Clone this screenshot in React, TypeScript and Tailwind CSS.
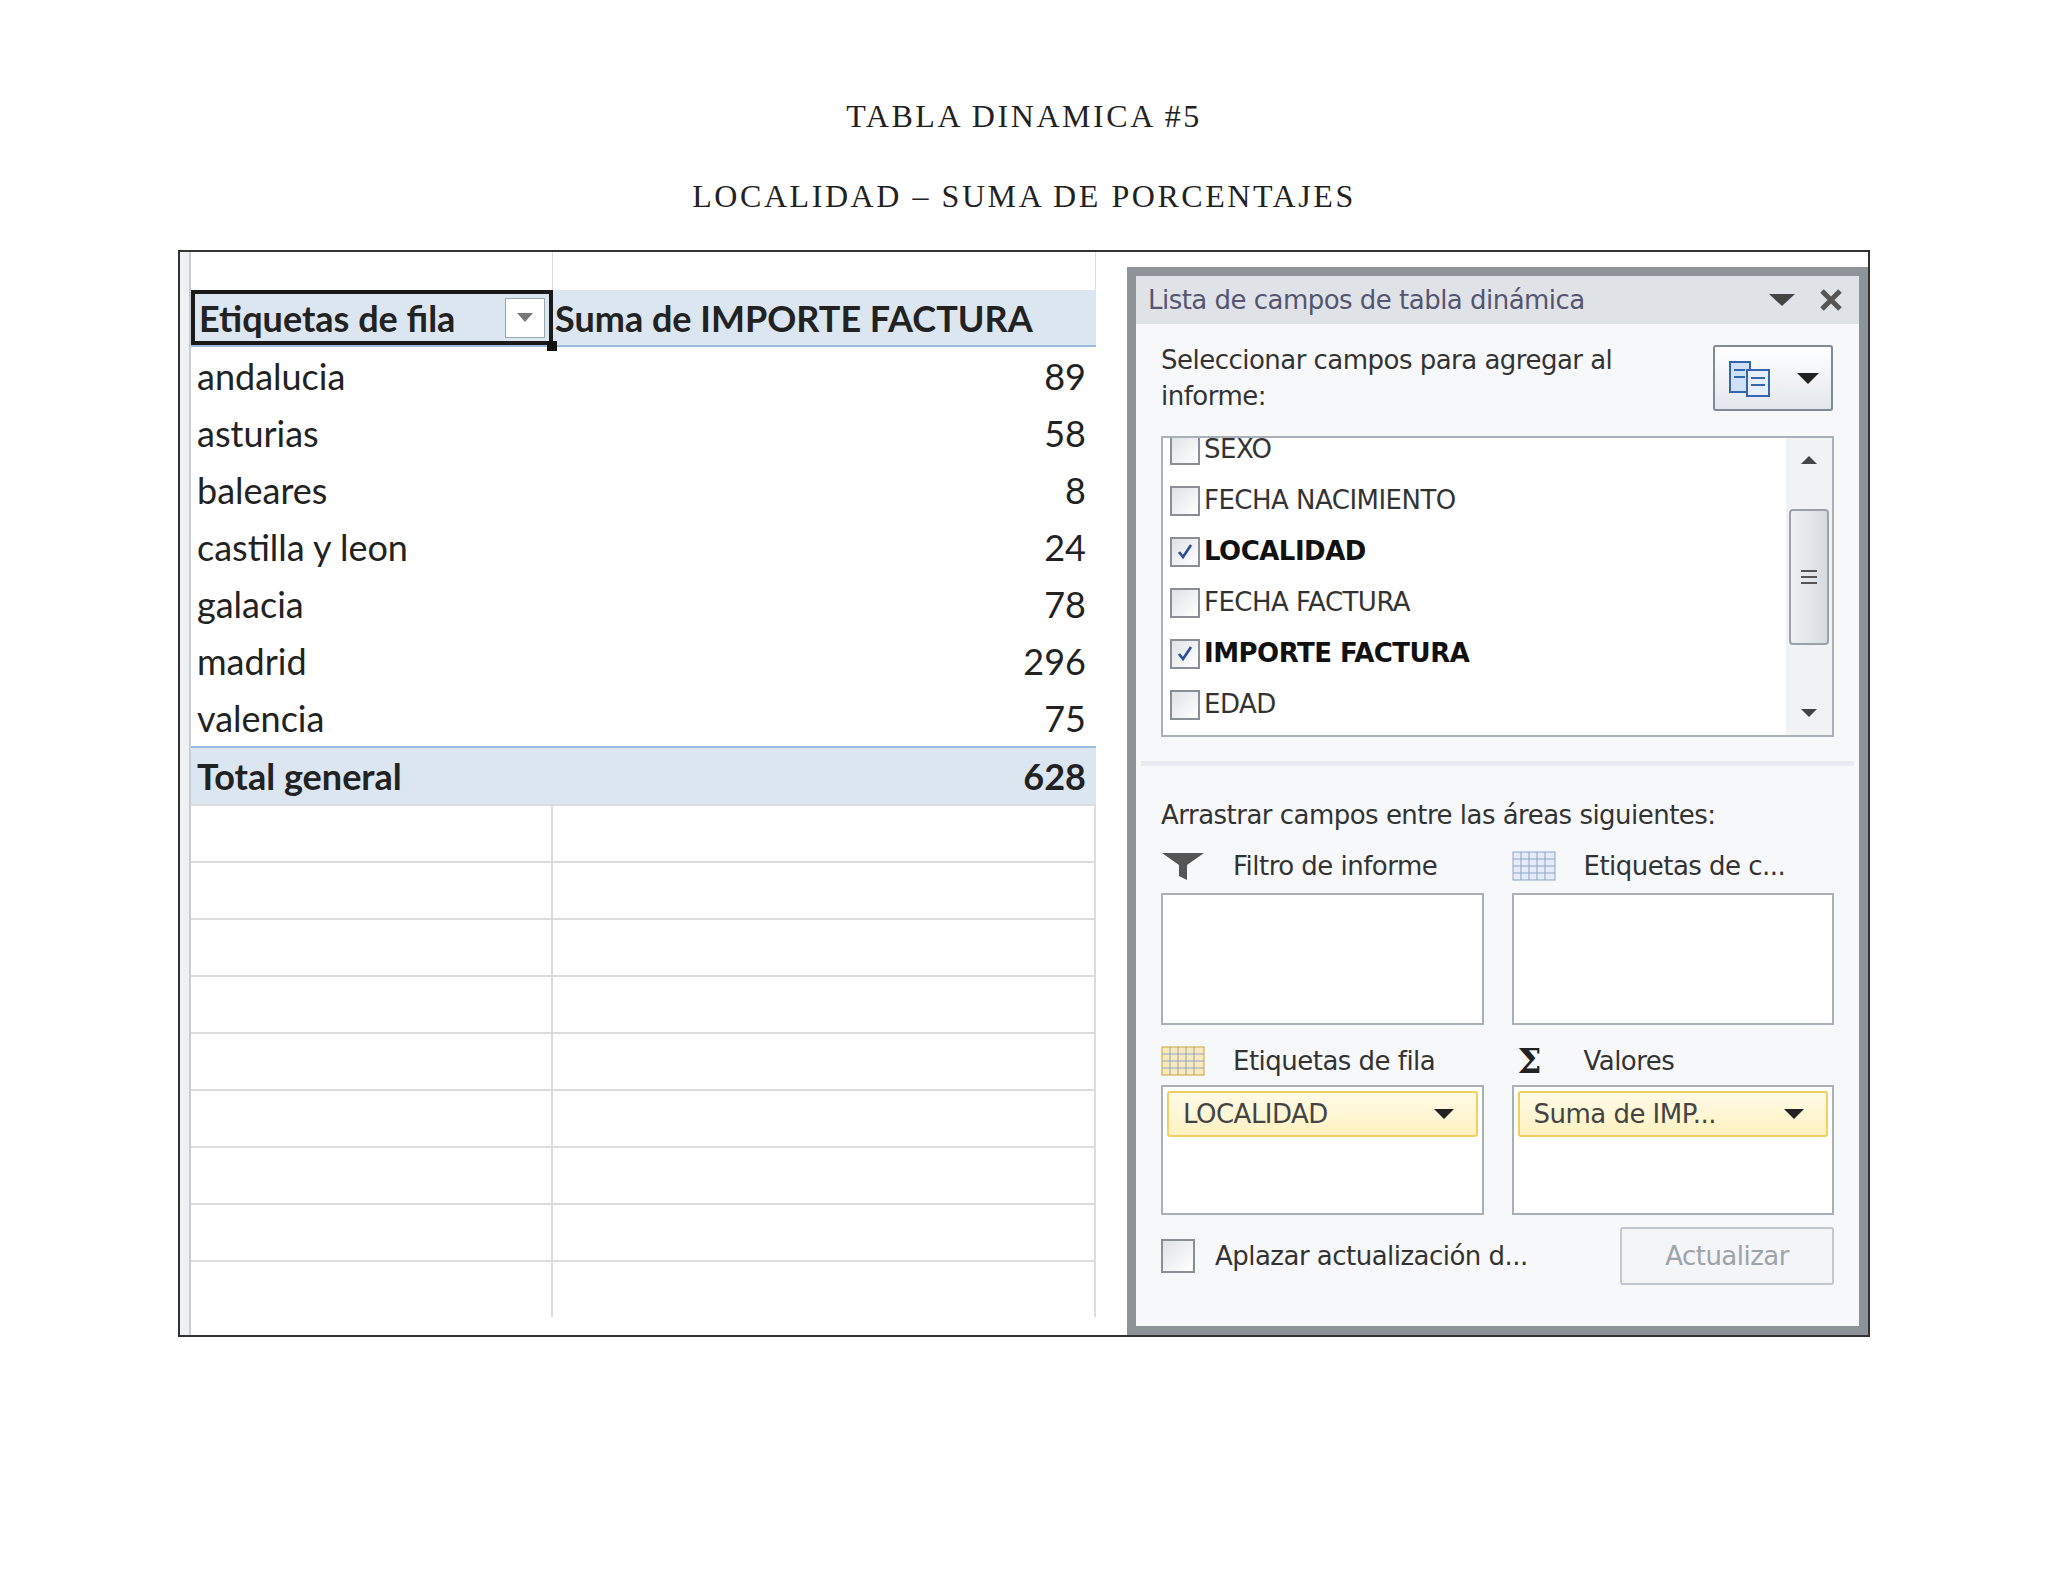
import React from "react";

const rows = [
  ["andalucia", "89"],
  ["asturias", "58"],
  ["baleares", "8"],
  ["castilla y leon", "24"],
  ["galacia", "78"],
  ["madrid", "296"],
  ["valencia", "75"],
];

const fields = [
  ["FECHA NACIMIENTO", false],
  ["LOCALIDAD", true],
  ["FECHA FACTURA", false],
  ["IMPORTE FACTURA", true],
  ["EDAD", false],
] as const;

function Box({ checked }: { checked: boolean }) {
  return (
    <span className="flex h-[30px] w-[30px] shrink-0 items-center justify-center border-2 border-[#8a8f96] bg-gradient-to-br from-[#dfe2e6] to-white">
      {checked && (
        <svg width="20" height="20" viewBox="0 0 20 20">
          <path d="M4 10 L8 15 L16 3" stroke="#2c4f9a" strokeWidth="2.6" fill="none" />
        </svg>
      )}
    </span>
  );
}

function Grid() {
  return (
    <svg width="44" height="30" viewBox="0 0 44 30">
      <rect x="1" y="1" width="42" height="28" fill="#e6ecf7" stroke="#8da3c9" />
      {[8, 15, 22].map((y) => <line key={y} x1="1" x2="43" y1={y} y2={y} stroke="#8da3c9" />)}
      {[9, 17, 25, 33].map((x) => <line key={x} y1="1" y2="29" x1={x} x2={x} stroke="#8da3c9" />)}
    </svg>
  );
}

function Chip({ label }: { label: string }) {
  return (
    <div className="m-[4px] flex h-[46px] items-center justify-between rounded-[3px] border-2 border-[#f2cf5e] bg-gradient-to-b from-[#fffbe8] to-[#fff1c0] pl-[14px] pr-[22px] text-[#444]">
      <span>{label}</span>
      <svg width="20" height="10" viewBox="0 0 20 10"><path d="M0 0 L20 0 L10 10 Z" fill="#222" /></svg>
    </div>
  );
}

export default function App() {
  return (
    <div className="flex h-[1582px] w-[2048px] flex-col items-center bg-white">
      <div className="mt-[92px] font-[Liberation_Serif,serif] text-[32px] tracking-[0.08em] text-[#222]">TABLA DINAMICA #5</div>
      <div className="mt-[32px] font-[Liberation_Serif,serif] text-[32px] tracking-[0.08em] text-[#222]">LOCALIDAD – SUMA DE PORCENTAJES</div>

      <div className="mt-[30px] flex h-[1087px] w-[1692px] border-2 border-[#333] font-[Lato,sans-serif] text-[36px] text-[#222]">
        <div className="w-[11px] shrink-0 border-r-2 border-[#c8cdd3] bg-[#eef0f2]" />
        <div className="flex w-[905px] shrink-0 flex-col">
          <div className="flex h-[38px] shrink-0">
            <div className="w-[362px] border-r border-[#dadcdd]" />
            <div className="flex-1 border-r border-[#dadcdd]" />
          </div>
          <div className="flex h-[57px] shrink-0 border-b-2 border-[#9bbbe0] bg-[#dce6f1] font-bold">
            <div className="relative flex w-[362px] items-center justify-between border-[4px] border-[#1a1a1a] px-[4px]">
              <span>Etiquetas de fila</span>
              <span className="flex h-[40px] w-[40px] items-center justify-center border border-[#9aa] bg-white">
                <svg width="16" height="10" viewBox="0 0 16 10"><path d="M0 0 L16 0 L8 9 Z" fill="#777" /></svg>
              </span>
              <span className="absolute -bottom-[10px] -right-[8px] h-[10px] w-[10px] bg-[#111]" />
            </div>
            <div className="flex flex-1 items-center pl-[2px]">Suma de IMPORTE FACTURA</div>
          </div>
          {rows.map(([n, v]) => (
            <div key={n} className="flex h-[57px] shrink-0 items-center justify-between pl-[6px] pr-[10px]">
              <span>{n}</span>
              <span>{v}</span>
            </div>
          ))}
          <div className="flex h-[58px] shrink-0 items-center justify-between border-t-2 border-[#9bbbe0] bg-[#dce6f1] pl-[6px] pr-[10px] font-bold">
            <span>Total general</span>
            <span>628</span>
          </div>
          {Array.from({ length: 9 }).map((_, i) => (
            <div key={i} className="flex h-[57px] shrink-0 border-t-2 border-[#dadcdd]">
              <div className="w-[362px] border-r-2 border-[#dadcdd]" />
              <div className="flex-1 border-r-2 border-[#dadcdd]" />
            </div>
          ))}
        </div>
        <div className="flex flex-1 items-end justify-end pl-[16px] pt-[15px]">
          <div className="flex h-full w-[741px] flex-col border-[9px] border-[#8e9399] bg-[#f7f8fa] font-[DejaVu_Sans,sans-serif] text-[26px] tracking-[-0.02em] text-[#333]">
            <div className="flex h-[48px] shrink-0 items-center justify-between bg-[#dfe3e8] pl-[12px] pr-[16px] text-[#555570]">
              <span>Lista de campos de tabla dinámica</span>
              <span className="flex items-center gap-[24px]">
                <svg width="26" height="12" viewBox="0 0 26 12"><path d="M0 0 L26 0 L13 12 Z" fill="#444" /></svg>
                <svg width="24" height="24" viewBox="0 0 24 24"><path d="M3 3 L21 21 M21 3 L3 21" stroke="#555" strokeWidth="5" /></svg>
              </span>
            </div>
            <div className="flex shrink-0 items-start justify-between pl-[25px] pr-[26px] pt-[18px]">
              <div className="leading-[36px]">Seleccionar campos para agregar al<br />informe:</div>
              <div className="mt-[3px] flex h-[66px] w-[120px] items-center justify-center gap-[24px] rounded-[3px] border-2 border-[#7f8a96] bg-gradient-to-b from-white to-[#e3e7ec]">
                <svg width="46" height="40" viewBox="0 0 46 40">
                  <rect x="3" y="4" width="20" height="30" fill="#cfe0f7" stroke="#3465b0" strokeWidth="2" />
                  <rect x="20" y="12" width="22" height="26" fill="#e6effb" stroke="#3465b0" strokeWidth="2" />
                  <path d="M7 12 H18 M7 19 H18 M24 20 H38 M24 27 H38" stroke="#3465b0" strokeWidth="2" />
                </svg>
                <svg width="22" height="11" viewBox="0 0 22 11"><path d="M0 0 L22 0 L11 11 Z" fill="#222" /></svg>
              </div>
            </div>
            <div className="mx-[25px] mt-[22px] flex h-[301px] shrink-0 border-2 border-[#a9b0b8] bg-white">
              <div className="flex flex-1 flex-col overflow-hidden pl-[7px]">
                <div className="-mt-[14px] flex h-[51px] shrink-0 items-center gap-[4px]"><Box checked={false} /><span>SEXO</span></div>
                {fields.map(([n, c]) => (
                  <div key={n} className={`flex h-[51px] shrink-0 items-center gap-[4px] ${c ? "font-bold text-[#111]" : ""}`}>
                    <Box checked={c} />
                    <span>{n}</span>
                  </div>
                ))}
              </div>
              <div className="flex w-[46px] shrink-0 flex-col items-center justify-between bg-[#f1f2f4] py-[18px]">
                <svg width="16" height="8" viewBox="0 0 16 8"><path d="M0 8 L16 8 L8 0 Z" fill="#444" /></svg>
                <div className="-mt-[20px] flex h-[136px] w-[40px] flex-col items-center justify-center gap-[4px] rounded-[4px] border-2 border-[#9aa1a9] bg-gradient-to-r from-[#eef0f3] to-[#d7dbe0]">
                  {[0, 1, 2].map((i) => <span key={i} className="h-[2px] w-[16px] bg-[#555]" />)}
                </div>
                <svg width="16" height="8" viewBox="0 0 16 8"><path d="M0 0 L16 0 L8 8 Z" fill="#444" /></svg>
              </div>
            </div>
            <div className="mx-[5px] mt-[24px] h-[5px] shrink-0 bg-[#e8ebef]" />
            <div className="mt-[30px] shrink-0 pl-[25px]">Arrastrar campos entre las áreas siguientes:</div>
            <div className="mx-[25px] mt-[4px] grid shrink-0 grid-cols-2 gap-x-[28px]">
              <div className="flex h-[54px] items-center gap-[28px]">
                <svg width="44" height="30" viewBox="0 0 44 30"><path d="M1 2 L43 2 L26 14 L26 29 L18 25 L18 14 Z" fill="#555" /></svg>
                <span>Filtro de informe</span>
              </div>
              <div className="flex h-[54px] items-center gap-[28px]"><Grid /><span>Etiquetas de c...</span></div>
              <div className="h-[132px] border-2 border-[#a9b0b8] bg-white" />
              <div className="h-[132px] border-2 border-[#a9b0b8] bg-white" />
              <div className="mt-[12px] flex h-[48px] items-center gap-[28px]">
                <svg width="44" height="30" viewBox="0 0 44 30">
                  <rect x="1" y="1" width="42" height="28" fill="#fbeab8" stroke="#c9a13c" />
                  {[8, 15, 22].map((y) => <line key={y} x1="1" x2="43" y1={y} y2={y} stroke="#8da3c9" />)}
                  {[9, 17, 25, 33].map((x) => <line key={x} y1="1" y2="29" x1={x} x2={x} stroke="#8da3c9" />)}
                </svg>
                <span>Etiquetas de fila</span>
              </div>
              <div className="mt-[12px] flex h-[48px] items-center gap-[28px]">
                <span className="w-[44px] pl-[6px] font-[DejaVu_Serif,serif] text-[34px] font-bold text-[#222]">Σ</span>
                <span>Valores</span>
              </div>
              <div className="h-[130px] border-2 border-[#a9b0b8] bg-white"><Chip label="LOCALIDAD" /></div>
              <div className="h-[130px] border-2 border-[#a9b0b8] bg-white"><Chip label="Suma de IMP..." /></div>
            </div>
            <div className="mx-[25px] mt-[12px] flex shrink-0 items-center justify-between">
              <div className="flex items-center gap-[20px]">
                <span className="h-[34px] w-[34px] border-2 border-[#8a8f96] bg-gradient-to-br from-[#dfe2e6] to-white" />
                <span>Aplazar actualización d...</span>
              </div>
              <div className="flex h-[58px] w-[214px] items-center justify-center rounded-[3px] border-2 border-[#c3c8ce] bg-[#f4f5f7] text-[#9da3aa]">Actualizar</div>
            </div>
          </div>
        </div>
      </div>
    </div>
  );
}
